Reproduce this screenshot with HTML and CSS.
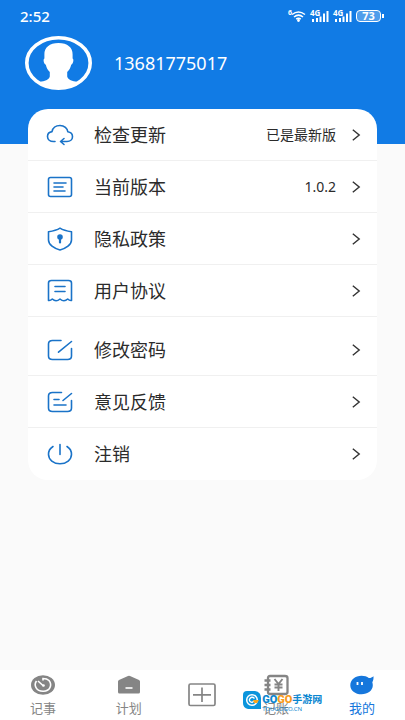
FILE: index.html
```html
<!DOCTYPE html>
<html lang="zh-CN">
<head>
<meta charset="utf-8">
<meta name="viewport" content="width=device-width, initial-scale=1">
<title>我的</title>
<link rel="stylesheet" href="styles.css">
</head>
<body>
<header class="header">
  <div class="status">
    <time class="clock">2:52</time>
    <div class="signals">
      <svg width="18" height="14" viewBox="0 0 18 14" fill="none" stroke="currentColor" stroke-width="1.500">
        <text class="tiny" x="0" y="6">6</text>
        <path d="M4 5.500Q10.500 .5 17 5.500M6 8Q10.500 4.300 15 8M8.200 10.200Q10.500 8.300 12.800 10.200"/><circle cx="10.500" cy="11.500" r=".7"/>
      </svg>
      <svg width="19" height="14" viewBox="0 0 19 14" fill="currentColor">
        <text class="gen" x="0" y="7">4G</text>
        <path d="M2 10h2v3H2zM6 9h2v4H6zM9.500 7.500h2V13h-2zM13 4.500h2V13h-2zM16.500 2h2v11h-2z"/>
      </svg>
      <svg width="19" height="14" viewBox="0 0 19 14" fill="currentColor">
        <text class="gen" x="0" y="7">4G</text>
        <path d="M2 10h2v3H2zM6 9h2v4H6zM9.500 7.500h2V13h-2zM13 4.500h2V13h-2zM16.500 2h2v11h-2z"/>
      </svg>
      <span class="battery">73</span>
    </div>
  </div>
  <div class="profile">
    <svg class="avatar" viewBox="0 0 67 54" aria-label="头像">
      <ellipse cx="33.500" cy="27" rx="31.700" ry="25.200" fill="none" stroke="#fff" stroke-width="3.600"/>
      <path fill="#fff" d="M33.500 7c9 0 14.300 4.500 14.100 11.500v4c1.500.5.700 5.500-1.400 6.200-.8 3.300-2 5.300-4 7.300v4.500c1 3.500 5 4.500 10.200 5.500Q44 53 33.500 53T14.600 46c5.200-1 9.200-2 10.200-5.500V36c-2-2-3.200-4-4-7.300-2.100-.7-2.900-5.700-1.400-6.200v-4C19.200 11.500 24.500 7 33.500 7z"/>
    </svg>
    <span class="phone">13681775017</span>
  </div>
</header>

<main class="main">
  <div class="card">
    <a class="row" href="#update">
      <svg class="icon" viewBox="0 0 28 24"><path d="M9 18.500H7.500C4 18.500 1.500 16.500 1.500 13.500 1.500 11 3.500 9 6 8.600 6.800 5 10 2.500 14 2.500c4.300 0 7.500 2.800 7.800 6.300 2.800.4 4.700 2.300 4.700 4.900 0 3-2.500 4.800-5.500 4.800H15M18 15.500l-3.500 3 3.500 3"/></svg>
      <span class="label">检查更新</span><span class="value">已是最新版</span>
      <svg class="chevron" viewBox="0 0 8 12"><path d="M.8.8 7.200 6 .8 11.200"/></svg>
    </a>
    <a class="row" href="#version">
      <svg class="icon" viewBox="0 0 28 24"><rect x="2.500" y="2.500" width="23" height="19" rx="2"/><path d="M8 8h12M8 12h9M8 16h11"/></svg>
      <span class="label">当前版本</span><span class="value">1.0.2</span>
      <svg class="chevron" viewBox="0 0 8 12"><path d="M.8.8 7.200 6 .8 11.200"/></svg>
    </a>
    <a class="row" href="#privacy">
      <svg class="icon" viewBox="0 0 28 24"><path d="M14 1.200c3 2 7 3 11.500 3.600V13c0 4.800-5.500 8.500-11.500 10C8 21.500 2.500 17.800 2.500 13V4.800C7 4.200 11 3.200 14 1.200z"/><circle class="solid" cx="14" cy="10" r="2"/><path class="bold" d="M14 10v5.500"/></svg>
      <span class="label">隐私政策</span>
      <svg class="chevron" viewBox="0 0 8 12"><path d="M.8.8 7.200 6 .8 11.200"/></svg>
    </a>
    <a class="row" href="#terms">
      <svg class="icon" viewBox="0 0 28 24"><path d="M2.500 21.500V4q0-2.500 3-2.500h17q3 0 3 2.500v17.500q-2 .3-3.800-1.500Q18 23.500 14 20 10 23.500 6.300 20 4.500 21.800 2.500 21.500zM9 7.500h10M9 12.500h10"/></svg>
      <span class="label">用户协议</span>
      <svg class="chevron" viewBox="0 0 8 12"><path d="M.8.8 7.200 6 .8 11.200"/></svg>
    </a>
    <a class="row group" href="#password">
      <svg class="icon" viewBox="0 0 28 24"><path d="M15 2.500H6.500q-4 0-4 3.500v12q0 3.500 4 3.500h15q4 0 4-3.500v-7.500M12.500 14.200 25.500 3.500"/></svg>
      <span class="label">修改密码</span>
      <svg class="chevron" viewBox="0 0 8 12"><path d="M.8.8 7.200 6 .8 11.200"/></svg>
    </a>
    <a class="row" href="#feedback">
      <svg class="icon" viewBox="0 0 28 24"><path d="M15.500 2.500H6.500q-4 0-4 3.500v12q0 3.500 4 3.500h15q4 0 4-3.500v-7.500M17 10.500l8.500-7M8 9.500h5M8 15h12"/></svg>
      <span class="label">意见反馈</span>
      <svg class="chevron" viewBox="0 0 8 12"><path d="M.8.8 7.200 6 .8 11.200"/></svg>
    </a>
    <a class="row" href="#logout">
      <svg class="icon" viewBox="0 0 28 24"><path d="M7 4.500C4.200 6.200 2.500 9 2.500 12.300c0 5.500 5 9.500 11.500 9.500s11.500-4 11.500-9.500c0-3.300-1.700-6.100-4.500-7.800M14 2.500V12.500"/></svg>
      <span class="label">注销</span>
      <svg class="chevron" viewBox="0 0 8 12"><path d="M.8.8 7.200 6 .8 11.200"/></svg>
    </a>
  </div>
</main>

<nav class="tabs">
  <a class="tab" href="#notes">
    <svg width="24" height="20" viewBox="0 0 24 20"><ellipse cx="12" cy="10" rx="12" ry="9.800" fill="currentColor"/><path d="M5.500 6C2.500 10 5 16 12 16.200S21.500 10 18 5.500Q16 3.500 12 3.500v2M7 6l5.500 5" fill="none" stroke="#fff" stroke-width="1.600"/><circle cx="12.500" cy="10.500" r="1.300" fill="#fff"/></svg>
    <span>记事</span>
  </a>
  <a class="tab" href="#plans">
    <svg width="24" height="20" viewBox="0 0 24 20"><path d="M1 6.500Q1 5.500 2 5L11 1q1-.5 2 0l9 4q1 .5 1 1.500V17q0 1.500-1.500 1.500h-19Q1 18.500 1 17z" fill="currentColor"/><path d="M8.500 13h7" stroke="#fff" stroke-width="1.600"/></svg>
    <span>计划</span>
  </a>
  <a class="add" href="#add" aria-label="添加">
    <svg width="28" height="24" viewBox="0 0 28 24" fill="none" stroke="currentColor" stroke-width="1.700"><rect x="1" y="1" width="26" height="21.500" rx="1.500"/><path d="M5 11.800h18M14 4.500v14.500"/></svg>
  </a>
  <a class="tab" href="#accounts">
    <svg width="26" height="20" viewBox="0 0 26 20" fill="none" stroke="currentColor" stroke-width="2.300"><path d="M5 3q0-2 2-2h15q2.500 0 2.500 2v14q0 2-2.500 2H7q-2 0-2-2zM1.500 5.500h6M1.500 10h6M1.500 14.500h6"/><path stroke-width="1.900" d="M11.500 4l4 5 4-5M15.500 9v7M11.500 9.500h8M11.500 12.500h8"/></svg>
    <span>记账</span>
    <span class="watermark">
      <svg width="18" height="18" viewBox="0 0 18 18"><path d="M4 0h8q6 1 6 7v11H5q-5-1-5-6V4q0-4 4-4z" fill="#0b95dc"/><circle cx="9" cy="9" r="5.300" fill="none" stroke="#fff" stroke-width="1.500"/><path d="M11.500 7.500Q9 5 7 7.500T9 11.500L11 10" fill="none" stroke="#fff" stroke-width="1.300"/><path d="M10 9h6l-2 3h-3z" fill="#f9a51b"/></svg>
      <span class="brand"><b class="blue">GO</b><b class="orange">GO</b><b class="site">手游网</b></span>
      <small class="domain">TOUGOGO.CN</small>
    </span>
  </a>
  <a class="tab active" href="#mine" aria-current="page">
    <svg width="24" height="20" viewBox="0 0 24 20"><path d="M11.500.8c3 0 5.500.8 7.300 2.200 1.500.2 3-.3 4.700-1.700.2 2.500-.3 4.500-1.200 6 .3 1 .5 2 .5 3 0 5.200-5 9-11.300 9S.3 15.500.3 10.200 5.300.8 11.500.8z" fill="currentColor"/><path d="M7.500 7v3M12 7v3" stroke="#fff" stroke-width="1.800"/></svg>
    <span>我的</span>
  </a>
</nav>
</body>
</html>
```
FILE: styles.css
```css
* { box-sizing: border-box; }

body {
  margin: 0;
  min-height: 100vh;
  display: flex;
  flex-direction: column;
  background: #fafafa;
  color: #2b2b2b;
  font-family: "Noto Sans", "Noto Sans CJK SC", sans-serif;
}

a { color: inherit; text-decoration: none; }
svg { display: block; flex: none; overflow: visible; }

.header {
  padding-bottom: 54px;
  background: #117be5;
  color: #fff;
}

.status {
  height: 32px;
  padding: 0 24px 0 20px;
  display: flex;
  align-items: center;
  justify-content: space-between;
}
.clock { font-size: 15px; font-weight: 500; }
.signals { display: flex; align-items: center; gap: 4px; }
.tiny { font-size: 7px; font-weight: 700; fill: currentColor; stroke: none; }
.gen { font-size: 8px; font-weight: 700; }
.battery {
  position: relative;
  width: 25px;
  height: 12px;
  border: 1px solid #fff;
  border-radius: 4px;
  background: #4f9deb;
  font-size: 11px;
  font-weight: 700;
  line-height: 10px;
  text-align: center;
}
.battery::after {
  content: "";
  position: absolute;
  right: -4px;
  top: 3px;
  width: 2px;
  height: 4px;
  background: #fff;
}

.profile {
  padding: 4px 25px 0;
  display: flex;
  align-items: center;
  gap: 22px;
}
.avatar { width: 67px; height: 54px; }
.phone { font-size: 18px; line-height: 24px; }

.main { flex: 1; padding: 0 28px 24px; }
.card {
  margin-top: -35px;
  border-radius: 20px;
  background: #fff;
  overflow: hidden;
}
.row {
  height: 52px;
  padding: 0 17px 0 18px;
  display: flex;
  align-items: center;
  border-bottom: 1px solid #f0f0f0;
}
.row:last-child { border-bottom: 0; }
.group { margin-top: 7px; }
.icon {
  width: 28px;
  height: 24px;
  fill: none;
  stroke: #1a73c8;
  stroke-width: 1.6;
  stroke-linecap: round;
  stroke-linejoin: round;
}
.icon .solid { fill: #1a73c8; }
.icon .bold { stroke-width: 2.2; }
.label { flex: 1; margin-left: 20px; font-size: 18px; line-height: 24px; }
.value { margin-right: 16px; font-size: 14px; line-height: 20px; }
.chevron {
  width: 8px;
  height: 12px;
  fill: none;
  stroke: #333;
  stroke-width: 1.4;
}

.tabs {
  height: 50px;
  display: grid;
  grid-template-columns: 7fr 7fr 5fr 7fr 7fr;
  background: #fff;
  color: #858585;
}
.tab {
  position: relative;
  padding-top: 5px;
  display: flex;
  flex-direction: column;
  align-items: center;
  gap: 4px;
  font-size: 13px;
  line-height: 18px;
}
.add { display: grid; place-items: center; }
.active { color: #1677dc; }

.watermark {
  position: absolute;
  left: 10px;
  top: 21px;
  display: grid;
  grid-template-columns: 18px auto;
  column-gap: 1px;
  white-space: nowrap;
}
.brand {
  display: flex;
  align-items: center;
  height: 17px;
  font-size: 10px;
  line-height: 17px;
}
.blue, .orange {
  font-family: Roboto, "Liberation Sans", sans-serif;
  font-size: 11px;
  font-weight: 900;
}
.blue, .site { color: #0b86d0; }
.orange { color: #f99b1c; }
.domain {
  grid-column: 2;
  margin-top: -4px;
  font-size: 6px;
  line-height: 8px;
  color: #1689d0;
}
```
